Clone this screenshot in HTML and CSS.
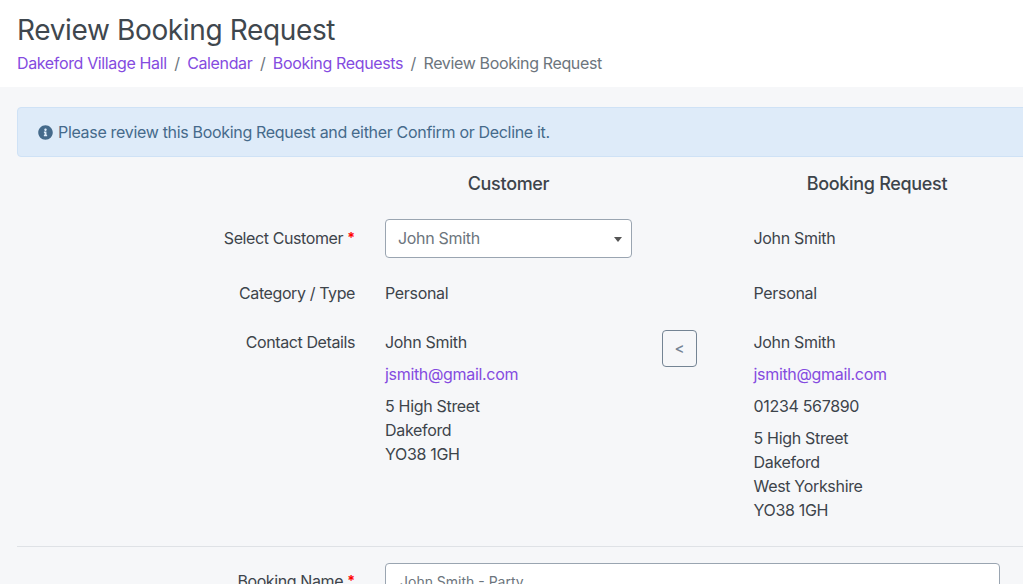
FILE: index.html
```html
<!DOCTYPE html>
<html lang="en">
<head>
<meta charset="utf-8">
<title>Review Booking Request</title>
<link rel="stylesheet" href="styles.css">
</head>
<body>
<header class="page-header">
  <h1>Review Booking Request</h1>
  <nav class="crumbs">
    <a href="#">Dakeford Village Hall</a><span class="sep">/</span><a href="#">Calendar</a><span class="sep">/</span><a href="#">Booking Requests</a><span class="sep">/</span><span class="current">Review Booking Request</span>
  </nav>
</header>
<main class="content">
  <div class="alert">
    <svg class="info" viewBox="0 0 512 512" aria-hidden="true"><path d="M256 8C119 8 8 119 8 256s111 248 248 248 248-111 248-248S393 8 256 8zm0 110c23.200 0 42 18.800 42 42s-18.800 42-42 42-42-18.800-42-42 18.800-42 42-42zm56 254c0 6.600-5.400 12-12 12h-88c-6.600 0-12-5.400-12-12v-24c0-6.600 5.400-12 12-12h12v-64h-12c-6.600 0-12-5.400-12-12v-24c0-6.600 5.400-12 12-12h64c6.600 0 12 5.400 12 12v100h12c6.600 0 12 5.400 12 12v24z"/></svg>
    <span>Please review this Booking Request and either Confirm or Decline it.</span>
  </div>

  <div class="grid heads">
    <div></div>
    <div class="head">Customer</div>
    <div></div>
    <div class="head">Booking Request</div>
  </div>

  <div class="grid row-select">
    <div class="label nudge">Select Customer <span class="req">*</span></div>
    <div class="select"><span>John Smith</span><i class="caret"></i></div>
    <div></div>
    <div class="nudge">John Smith</div>
  </div>

  <div class="grid row-type">
    <div class="label">Category / Type</div>
    <div>Personal</div>
    <div></div>
    <div>Personal</div>
  </div>

  <div class="grid row-contact">
    <div class="label">Contact Details</div>
    <div>
      <p>John Smith</p>
      <p><a href="#">jsmith@gmail.com</a></p>
      <p>5 High Street<br>Dakeford<br>YO38 1GH</p>
    </div>
    <div><button class="copy" type="button">&lt;</button></div>
    <div>
      <p>John Smith</p>
      <p><a href="#">jsmith@gmail.com</a></p>
      <p>01234 567890</p>
      <p>5 High Street<br>Dakeford<br>West Yorkshire<br>YO38 1GH</p>
    </div>
  </div>

  <hr class="divider">

  <div class="grid row-name">
    <div class="label name-label">Booking Name <span class="req">*</span></div>
    <div class="input">John Smith - Party</div>
  </div>
</main>
</body>
</html>
```
FILE: styles.css
```css
* { box-sizing: border-box; }
html, body { margin: 0; height: 584px; overflow: hidden; }
body {
  font-family: Inter, "Liberation Sans", sans-serif;
  font-size: 16px;
  line-height: 24px;
  letter-spacing: -0.32px;
  color: #3d444b;
  background: #f6f7f9;
}
a { color: #844be0; text-decoration: none; }
p { margin: 0 0 8px; }

.page-header { background: #fff; height: 87px; padding: 13px 17px 0; }
h1 { margin: 0; font-size: 28px; line-height: 34px; font-weight: 400; letter-spacing: -0.36px; color: #3f474e; }
.crumbs { margin-top: 4px; white-space: nowrap; letter-spacing: -0.36px; }
.sep { color: #6c757d; padding: 0 7.5px; }
.current { color: #6c757d; }

.content { padding: 20px 23px 0 17px; }
.alert {
  display: flex; align-items: center; gap: 5px;
  height: 50px; margin-right: -60px; padding: 0 20px;
  background: #deebf9; border: 1px solid #cfe2f6; border-radius: 4px;
  color: #456a8b;
}
.info { width: 15px; height: 15px; fill: #456a8b; flex: none; }

.grid { display: grid; grid-template-columns: 338px 247px 62px 246px; column-gap: 30px; }
.grid > :nth-child(4) { margin-left: -0.5px; }
.heads { margin-top: 15px; }
.heads > .head:nth-child(4) { margin-left: 0; }
.head { text-align: center; font-size: 18px; font-weight: 500; }
.label { text-align: right; letter-spacing: -0.4px; }
.req { display: inline-block; color: #f00; font-size: 14px; font-weight: 700; line-height: 1; letter-spacing: 0; vertical-align: 1px; }

.row-select { margin-top: 23px; align-items: center; }
.nudge { padding-bottom: 2px; }
.select, .input {
  background: #fff; border: 1px solid #9aa5b1; border-radius: 4px; color: #6c757d;
}
.select {
  height: 39px; padding: 0 13px 1px 12px;
  display: flex; align-items: center; justify-content: space-between;
}
.caret {
  width: 0; height: 0; margin-right: -4px; margin-top: 2px;
  border-left: 4px solid transparent; border-right: 4px solid transparent; border-top: 5px solid #555;
}
.row-type { margin-top: 23px; }
.row-contact { margin-top: 25px; }
.copy {
  display: block; width: 35px; height: 37px; padding: 0;
  background: transparent; border: 1px solid #748494; border-radius: 4px;
  color: #748494; font: 500 15px/1 Inter, "Liberation Sans", sans-serif;
}
.divider { border: 0; border-top: 1px solid #dfe2e6; margin: 16px 0 16px; width: 1006px; }
.row-name { grid-template-columns: 338px 615px; }
.name-label { padding-top: 6px; }
.input { height: 39px; padding: 6px 14px; font-size: 14px; letter-spacing: 0; }
```
